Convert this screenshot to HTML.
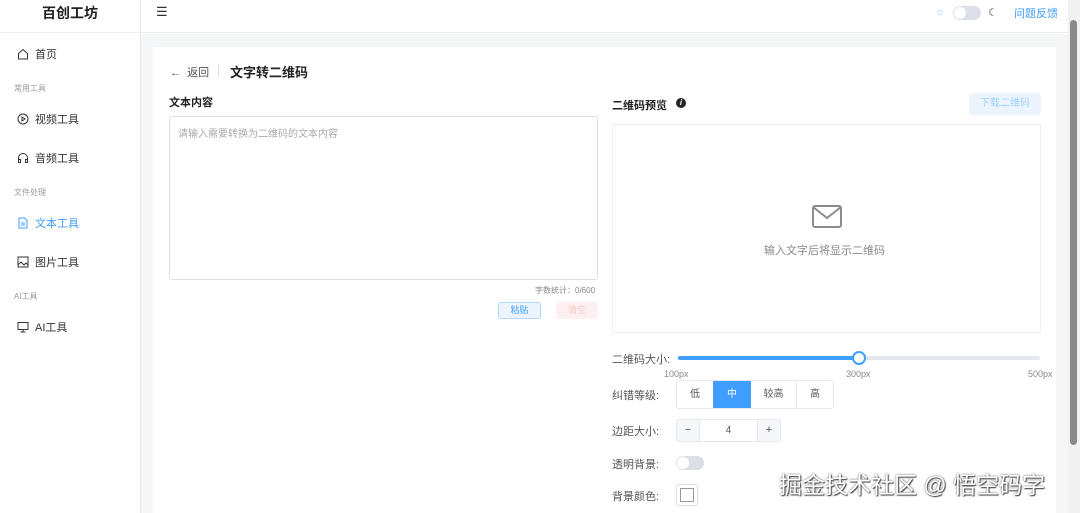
<!DOCTYPE html>
<html><head><meta charset="utf-8"><style>
*{box-sizing:border-box;margin:0;padding:0}
body{width:1080px;height:513px;overflow:hidden;background:#fff;font-family:"Liberation Sans","Noto Sans CJK SC",sans-serif;color:#303133;position:relative;font-size:11px}
.abs{position:absolute}
.side{left:0;top:0;width:141px;height:513px;border-right:1px solid #e8e8e8;background:#fff}
.logo{left:0;top:0;width:140px;height:33px;border-bottom:1px solid #eee;text-align:center;line-height:26px;font-size:14px;font-weight:bold;color:#222}
.mi{left:17px;font-size:11px;color:#333;display:flex;align-items:center;gap:6px}
.grp{left:14px;font-size:8px;color:#999}
.hdr{left:141px;top:0;width:927px;height:33px;border-bottom:1px solid #eee;background:#fff}
.main{left:141px;top:34px;width:927px;height:479px;background:#f5f6f8}
.card{left:153px;top:47px;width:903px;height:466px;background:#fff}
.lbl{font-size:11px;color:#555}
</style></head><body>
<div class="abs side"></div>
<div class="abs logo">百创工坊</div>
<div class="abs mi" style="top:46px"><svg width="12" height="12" viewBox="0 0 12 12" fill="none" stroke="#333"><path d="M1.5 5.5L6 1.5 10.5 5.5V11H1.5Z"/></svg>首页</div>
<div class="abs grp" style="top:83px">常用工具</div>
<div class="abs mi" style="top:111px"><svg width="12" height="12" viewBox="0 0 12 12" fill="none" stroke="#333"><circle cx="6" cy="6" r="5"/><path d="M5 4v4l3-2z"/></svg>视频工具</div>
<div class="abs mi" style="top:150px"><svg width="12" height="12" viewBox="0 0 12 12" fill="none" stroke="#333"><path d="M1.5 9V6a4.5 4.5 0 019 0v3M1.5 7.5h2v3h-2zM8.5 7.5h2v3h-2z"/></svg>音频工具</div>
<div class="abs grp" style="top:187px">文件处理</div>
<div class="abs mi" style="top:215px;color:#409eff"><svg width="12" height="12" viewBox="0 0 12 12" fill="none" stroke="#409eff"><path d="M2 1h5.5L10 3.5V11H2zM4 6h4M4 8h4"/></svg>文本工具</div>
<div class="abs mi" style="top:254px"><svg width="12" height="12" viewBox="0 0 12 12" fill="none" stroke="#333"><rect x="1" y="1" width="10" height="10"/><path d="M1 9l3-3 3 3 2-2 2 2"/></svg>图片工具</div>
<div class="abs grp" style="top:291px">AI工具</div>
<div class="abs mi" style="top:319px"><svg width="12" height="12" viewBox="0 0 12 12" fill="none" stroke="#333"><rect x="1" y="1.5" width="10" height="7"/><path d="M6 8.5v2M3.5 11h5"/></svg>AI工具</div>

<div class="abs hdr"></div>
<div class="abs" style="left:156px;top:4px;font-size:13px;color:#333">☰</div>
<div class="abs" style="left:935px;top:6px;font-size:11px;color:#9cc5f5">☼</div>
<div class="abs" style="left:953px;top:6px;width:28px;height:14px;border-radius:7px;background:#dcdfe6"><div style="position:absolute;left:1px;top:1px;width:12px;height:12px;border-radius:50%;background:#fff"></div></div>
<div class="abs" style="left:988px;top:6px;font-size:11px;color:#555">☾</div>
<div class="abs" style="left:1014px;top:5px;font-size:11px;color:#409eff">问题反馈</div>

<div class="abs main"></div>
<div class="abs card"></div>
<div class="abs" style="left:1068px;top:0;width:12px;height:513px;background:#f1f1f1"><div style="position:absolute;left:2px;top:20px;width:7px;height:425px;background:#8a8a8a;border-radius:4px"></div></div>

<div class="abs" style="left:170px;top:64px;font-size:11px;color:#555">←&nbsp;&nbsp;返回</div>
<div class="abs" style="left:218px;top:65px;width:1px;height:12px;background:#ddd"></div>
<div class="abs" style="left:230px;top:62px;font-size:13px;font-weight:bold;color:#222">文字转二维码</div>
<div class="abs" style="left:169px;top:94px;font-size:11px;font-weight:bold;color:#222">文本内容</div>
<div class="abs" style="left:169px;top:116px;width:429px;height:164px;border:1px solid #dcdfe6;border-radius:3px"></div>
<div class="abs" style="left:178px;top:125px;font-size:10px;color:#aaa">请输入需要转换为二维码的文本内容</div>
<div class="abs" style="left:535px;top:285px;font-size:8px;color:#888">字数统计：0/600</div>
<div class="abs" style="left:498px;top:302px;width:43px;height:17px;border:1px solid #b3d8ff;background:#ecf5ff;border-radius:3px;color:#409eff;font-size:9px;text-align:center;line-height:15px">粘贴</div>
<div class="abs" style="left:556px;top:302px;width:42px;height:17px;background:#fef0f0;border-radius:3px;color:#fbc4c4;font-size:9px;text-align:center;line-height:17px">清空</div>

<div class="abs" style="left:612px;top:97px;font-size:11px;font-weight:bold;color:#222">二维码预览</div>
<div class="abs" style="left:676px;top:98px;width:10px;height:10px;border-radius:50%;background:#222;color:#fff;font-size:8px;text-align:center;line-height:10px;font-style:italic;font-weight:bold">i</div>
<div class="abs" style="left:969px;top:93px;width:72px;height:22px;background:#ecf5ff;border-radius:3px;color:#a0cfff;font-size:10px;text-align:center;line-height:22px">下载二维码</div>
<div class="abs" style="left:612px;top:124px;width:429px;height:209px;border:1px solid #f0f0f0"></div>
<svg class="abs" style="left:811px;top:204px" width="32" height="26" viewBox="0 0 32 26" fill="none" stroke="#8c8c8c" stroke-width="2"><rect x="2" y="2" width="28" height="21" rx="2"/><path d="M2 3l14 11 14-11"/></svg>
<div class="abs" style="left:764px;top:242px;font-size:11px;color:#888">输入文字后将显示二维码</div>

<div class="abs lbl" style="left:612px;top:351px">二维码大小:</div>
<div class="abs" style="left:678px;top:356px;width:362px;height:4px;border-radius:2px;background:#e4e7ed"></div>
<div class="abs" style="left:678px;top:356px;width:181px;height:4px;border-radius:2px;background:#409eff"></div>
<div class="abs" style="left:852px;top:351px;width:14px;height:14px;border-radius:50%;background:#fff;border:2px solid #409eff"></div>
<div class="abs" style="left:664px;top:369px;font-size:9px;color:#888">100px</div>
<div class="abs" style="left:846px;top:369px;font-size:9px;color:#888">300px</div>
<div class="abs" style="left:1028px;top:369px;font-size:9px;color:#888">500px</div>

<div class="abs lbl" style="left:612px;top:387px">纠错等级:</div>
<div class="abs" style="left:676px;top:380px;width:158px;height:29px;border:1px solid #e4e7ed;border-radius:3px;display:flex;font-size:10px;color:#555">
<div style="width:36px;text-align:center;line-height:27px">低</div>
<div style="width:38px;text-align:center;line-height:27px;background:#409eff;color:#fff">中</div>
<div style="width:46px;text-align:center;line-height:27px;border-right:1px solid #e4e7ed">较高</div>
<div style="flex:1;text-align:center;line-height:27px">高</div></div>

<div class="abs lbl" style="left:612px;top:423px">边距大小:</div>
<div class="abs" style="left:676px;top:419px;width:105px;height:23px;border:1px solid #e4e7ed;border-radius:3px;background:#f5f7fa;display:flex;font-size:11px;color:#555">
<div style="width:22px;text-align:center;line-height:21px">−</div>
<div style="width:59px;background:#fff;text-align:center;line-height:21px;border-left:1px solid #e4e7ed;border-right:1px solid #e4e7ed;font-size:10px">4</div>
<div style="flex:1;text-align:center;line-height:21px">+</div></div>

<div class="abs lbl" style="left:612px;top:456px">透明背景:</div>
<div class="abs" style="left:676px;top:456px;width:28px;height:14px;border-radius:7px;background:#dcdfe6"><div style="position:absolute;left:1px;top:1px;width:12px;height:12px;border-radius:50%;background:#fff"></div></div>
<div class="abs lbl" style="left:612px;top:488px">背景颜色:</div>
<div class="abs" style="left:676px;top:484px;width:22px;height:22px;border:1px solid #dcdfe6;border-radius:3px;padding:3px"><div style="width:100%;height:100%;border:1px solid #999"></div></div>

<div class="abs" style="left:779px;top:466px;font-size:23px;color:#fff;text-shadow:0 0 2px #555,1px 1px 1px #444">掘金技术社区 @ 悟空码字</div>
</body></html>
